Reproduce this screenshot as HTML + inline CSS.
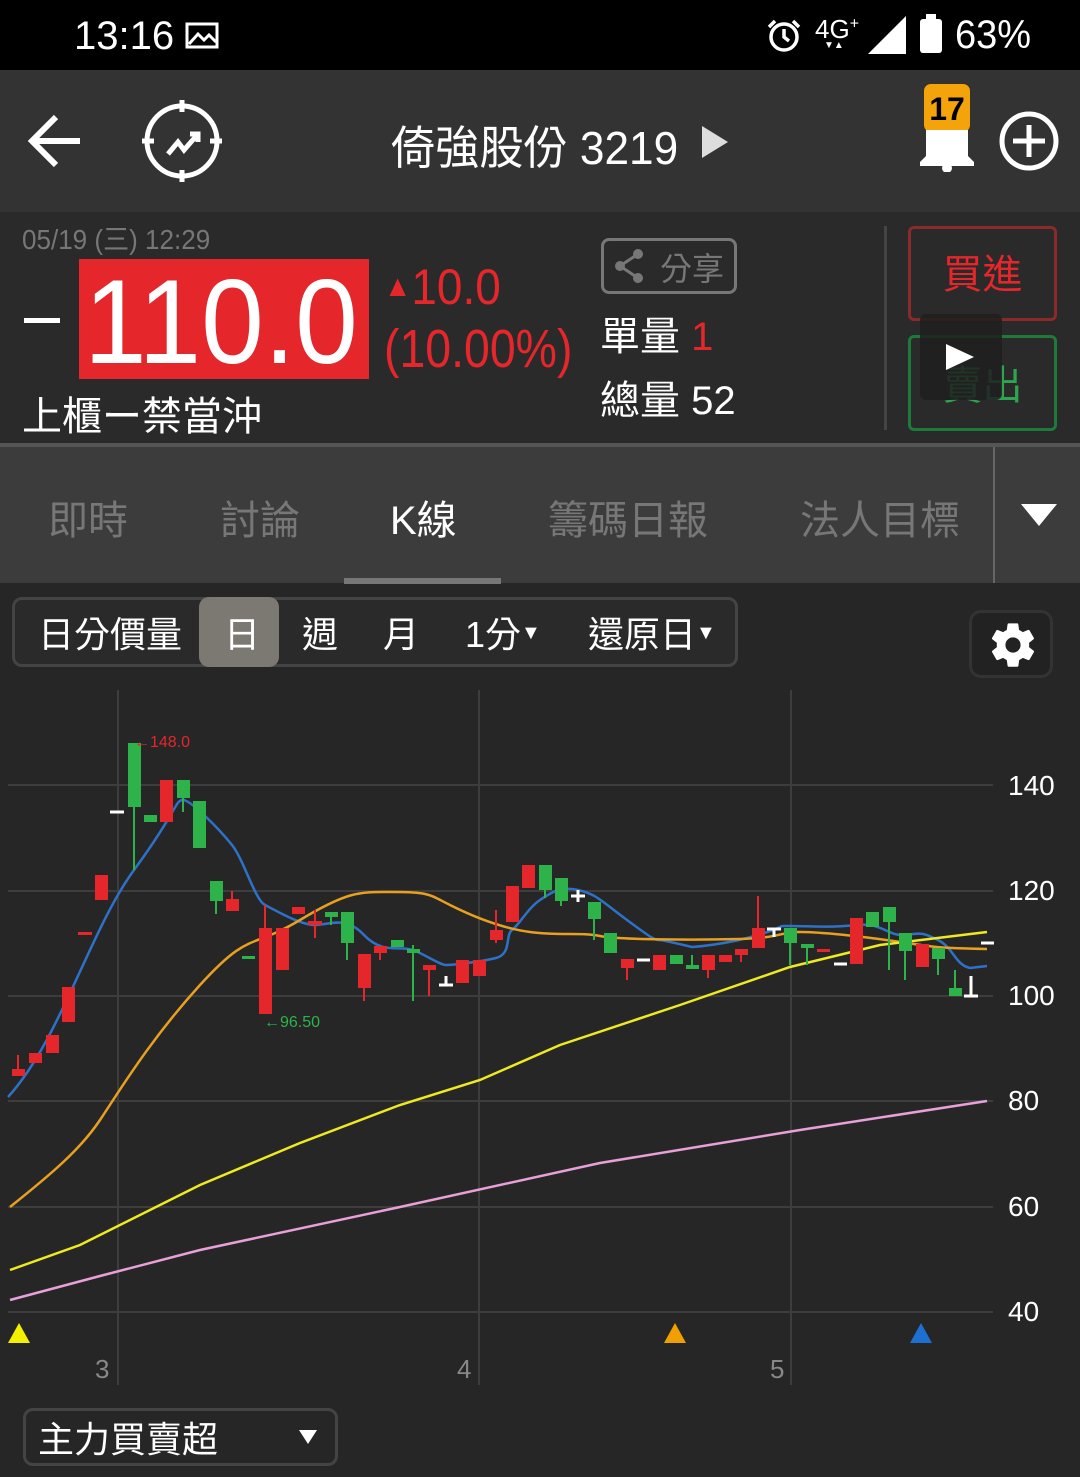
<!DOCTYPE html>
<html><head><meta charset="utf-8">
<style>
*{margin:0;padding:0;box-sizing:border-box}
body{width:1080px;height:1477px;background:#262626;font-family:"Liberation Sans","Noto Sans CJK TC",sans-serif;color:#fff;position:relative;overflow:hidden}
.a{position:absolute;white-space:nowrap}
</style></head><body>
<div class="a" style="left:0;top:0;width:1080px;height:70px;background:#000"></div>
<div class="a" style="left:74px;top:14px;font-size:40px">13:16</div>
<svg class="a" style="left:185px;top:22px" width="34" height="28"><rect x="2" y="2" width="30" height="23" fill="none" stroke="#fff" stroke-width="3"/><path d="M4 22 L13 12 L19 18 L24 13 L31 20" fill="none" stroke="#fff" stroke-width="3"/></svg>
<svg class="a" style="left:765px;top:18px" width="38" height="36"><circle cx="19" cy="19" r="13" fill="none" stroke="#fff" stroke-width="3.5"/><path d="M19 11V19L24 23M4 9L10 3M34 9L28 3" stroke="#fff" stroke-width="3.5" fill="none"/></svg>
<div class="a" style="left:815px;top:14px;font-size:26px">4G<sup style="font-size:16px">+</sup></div>
<div class="a" style="left:824px;top:40px;font-size:10px">▼▲</div>
<svg class="a" style="left:866px;top:14px" width="42" height="42"><path d="M40 2V40H2Z" fill="#fff"/></svg>
<svg class="a" style="left:918px;top:14px" width="26" height="40"><rect x="8" y="0" width="10" height="6" fill="#fff"/><rect x="2" y="5" width="22" height="34" rx="3" fill="#fff"/></svg>
<div class="a" style="left:955px;top:13px;font-size:40px;transform:scaleX(.95);transform-origin:left">63%</div>

<div class="a" style="left:0;top:70px;width:1080px;height:142px;background:#333"></div>
<svg class="a" style="left:26px;top:112px" width="60" height="58"><path d="M54 29H6M30 5L6 29L30 53" stroke="#fff" stroke-width="6" fill="none"/></svg>
<svg class="a" style="left:140px;top:98px" width="84" height="86"><circle cx="42" cy="43" r="35" fill="none" stroke="#fff" stroke-width="5"/><path d="M42 2V14M42 72V84M2 43H14M70 43H82" stroke="#fff" stroke-width="5"/><path d="M28 56L38 44L44 52L58 36M50 36H58V44" stroke="#fff" stroke-width="5" fill="none"/></svg>
<div class="a" style="left:391px;top:112px;font-size:46px;transform:scaleX(.96);transform-origin:left">倚強股份 3219</div>
<svg class="a" style="left:700px;top:124px" width="30" height="36"><path d="M2 2L28 18L2 34Z" fill="#ddd"/></svg>
<div class="a" style="left:924px;top:84px;width:46px;height:48px;background:#f5a30a;border-radius:7px;color:#000;font-size:32px;font-weight:bold;text-align:center;line-height:50px">17</div>
<svg class="a" style="left:918px;top:130px" width="58" height="42"><path d="M8 0H50V26L56 32V36H2V32L8 26Z" fill="#fff"/><circle cx="29" cy="38" r="5" fill="#fff"/></svg>
<svg class="a" style="left:998px;top:110px" width="62" height="62"><circle cx="31" cy="31" r="27" fill="none" stroke="#fff" stroke-width="5"/><path d="M31 15V47M15 31H47" stroke="#fff" stroke-width="5"/></svg>

<div class="a" style="left:0;top:212px;width:1080px;height:232px;background:#2a2a2a"></div>
<div class="a" style="left:22px;top:218px;font-size:28px;color:#777;transform:scaleX(.93);transform-origin:left">05/19 (三) 12:29</div>
<div class="a" style="left:24px;top:318px;width:36px;height:5px;background:#fff"></div>
<div class="a" style="left:79px;top:259px;width:290px;height:120px;background:#e5262b"></div>
<div class="a" style="left:84px;top:252px;font-size:120px;line-height:140px;color:#fff;transform:scaleX(.94);transform-origin:left">110.0</div>
<div class="a" style="left:384px;top:258px;font-size:50px;color:#e5262b;transform:scaleX(.92);transform-origin:left"><span style="font-size:30px;vertical-align:8px">▲</span>10.0</div>
<div class="a" style="left:384px;top:318px;font-size:54px;color:#e5262b;transform:scaleX(.86);transform-origin:left">(10.00%)</div>
<div class="a" style="left:22px;top:384px;font-size:40px">上櫃ー禁當沖</div>
<div class="a" style="left:601px;top:238px;width:136px;height:56px;border:3px solid #777;border-radius:8px"></div>
<svg class="a" style="left:612px;top:248px" width="36" height="36"><circle cx="26" cy="6" r="5" fill="#777"/><circle cx="8" cy="18" r="5" fill="#777"/><circle cx="26" cy="30" r="5" fill="#777"/><path d="M26 6L8 18L26 30" stroke="#777" stroke-width="3" fill="none"/></svg>
<div class="a" style="left:660px;top:244px;font-size:32px;color:#777">分享</div>
<div class="a" style="left:600px;top:304px;font-size:40px">單量 <span style="color:#e5262b">1</span></div>
<div class="a" style="left:600px;top:368px;font-size:40px">總量 52</div>
<div class="a" style="left:884px;top:226px;width:3px;height:204px;background:#444"></div>
<div class="a" style="left:908px;top:226px;width:149px;height:95px;border:3px solid #8a2a2a;border-radius:6px;color:#e5262b;font-size:40px;text-align:center;line-height:92px">買進</div>
<div class="a" style="left:908px;top:335px;width:149px;height:96px;border:3px solid #1f7a3a;border-radius:6px;color:#2ea44f;font-size:40px;text-align:center;line-height:96px">賣出</div>
<div class="a" style="left:920px;top:314px;width:82px;height:86px;background:rgba(30,30,30,.85);border-radius:6px"></div>
<svg class="a" style="left:944px;top:342px" width="32" height="30"><path d="M2 2L30 15L2 28Z" fill="#fff"/></svg>

<div class="a" style="left:0;top:443px;width:1080px;height:4px;background:#555"></div>
<div class="a" style="left:0;top:447px;width:1080px;height:136px;background:#3c3c3c"></div>
<div class="a" style="left:48px;top:488px;font-size:40px;color:#777">即時</div>
<div class="a" style="left:220px;top:488px;font-size:40px;color:#777">討論</div>
<div class="a" style="left:390px;top:488px;font-size:40px;color:#fff">K線</div>
<div class="a" style="left:548px;top:488px;font-size:40px;color:#777">籌碼日報</div>
<div class="a" style="left:800px;top:488px;font-size:40px;color:#777">法人目標</div>
<div class="a" style="left:344px;top:578px;width:157px;height:6px;background:#777"></div>
<div class="a" style="left:993px;top:447px;width:2px;height:136px;background:#666"></div>
<svg class="a" style="left:1020px;top:503px" width="38" height="24"><path d="M1 1H37L19 23Z" fill="#fff"/></svg>

<div class="a" style="left:12px;top:597px;width:726px;height:70px;border:3px solid #444;border-radius:10px;background:#2a2a2a"></div>
<div class="a" style="left:199px;top:597px;width:80px;height:70px;background:#7c7872;border-radius:10px"></div>
<div class="a" style="left:38px;top:606px;font-size:36px">日分價量</div>
<div class="a" style="left:224px;top:606px;font-size:36px">日</div>
<div class="a" style="left:302px;top:606px;font-size:36px">週</div>
<div class="a" style="left:383px;top:606px;font-size:36px">月</div>
<div class="a" style="left:465px;top:606px;font-size:36px">1分<span style="font-size:20px;vertical-align:8px">▼</span></div>
<div class="a" style="left:588px;top:606px;font-size:36px">還原日<span style="font-size:20px;vertical-align:8px">▼</span></div>
<div class="a" style="left:969px;top:610px;width:84px;height:68px;border:3px solid #333;border-radius:12px;background:#222"></div>
<svg class="a" style="left:987px;top:619px" width="52" height="52" viewBox="0 0 24 24"><path fill="#fff" d="M19.4 13c.04-.3.06-.64.06-1s-.02-.7-.07-1l2.1-1.650c.2-.15.24-.42.12-.64l-2-3.460c-.12-.22-.38-.3-.6-.22l-2.5 1c-.5-.4-1.080-.73-1.700-.98l-.37-2.650A.5.5 0 0 0 14 2h-4a.5.5 0 0 0-.5.42l-.37 2.650c-.6.25-1.170.58-1.690.98l-2.490-1a.5.5 0 0 0-.6.22l-2 3.460c-.13.22-.07.49.12.64L4.570 11c-.05.3-.07.68-.07 1s.02.7.07 1l-2.100 1.650a.5.5 0 0 0-.12.64l2 3.460c.12.22.38.3.6.22l2.490-1c.52.4 1.080.73 1.690.98l.37 2.650c.05.24.25.42.5.42h4c.25 0 .46-.18.49-.42l.37-2.650c.61-.25 1.170-.58 1.690-.98l2.490 1c.23.09.48 0 .6-.22l2-3.460a.5.5 0 0 0-.12-.64zM12 15.500A3.500 3.500 0 1 1 12 8.500a3.500 3.500 0 0 1 0 7z"/></svg>

<svg class="a" style="left:0;top:0" width="1080" height="1477">
<g stroke="#3d3d3d" stroke-width="2">
<path d="M8 785H993M8 891H993M8 996H993M8 1101H993M8 1207H993M8 1312H993"/>
<path d="M118 690V1385M479 690V1385M791 690V1385"/>
</g>
<g font-size="28" fill="#fff" font-family="Liberation Sans">
<text x="1008" y="795">140</text><text x="1008" y="900">120</text><text x="1008" y="1005">100</text><text x="1008" y="1110">80</text><text x="1008" y="1216">60</text><text x="1008" y="1321">40</text>
</g>
<g font-size="26" fill="#888" font-family="Liberation Sans"><text x="95" y="1378">3</text><text x="457" y="1378">4</text><text x="770" y="1378">5</text></g>
<path d="M8 1097C60 1040 90 930 134 870S175 800 183 800S220 830 232 845S255 900 265 905S300 925 315 925S345 915 364 935S400 945 413 950S440 965 446 965S480 962 496 958S505 935 512 930S528 908 540 900S560 886 578 890S600 900 627 920S655 940 659 940S692 947 692 947S725 945 758 935S774 926 790 926S830 928 856 925S889 937 905 935S922 932 938 940S955 965 970 968L987 966" fill="none" stroke="#2e72c8" stroke-width="2.5"/>
<path d="M10 1207C50 1175 80 1150 100 1120S150 1040 200 985S250 950 300 920S360 892 395 892S430 895 450 905S500 928 530 932S580 932 600 936S700 940 740 939S780 932 800 932S860 936 900 942S940 948 987 949" fill="none" stroke="#e8a020" stroke-width="2.5"/>
<path d="M10 1270L80 1245L200 1185L300 1143L400 1105L480 1080L560 1045L680 1005L790 967L880 945L987 932" fill="none" stroke="#eeea20" stroke-width="2.5"/>
<path d="M10 1300L100 1276L200 1250L400 1207L600 1163L800 1130L987 1101" fill="none" stroke="#e8a0d8" stroke-width="2.5"/>
<g>
<g fill="#e5262b" stroke="#e5262b" stroke-width="2">
<path d="M18 1055V1075M265 905V1014M315 910V938M364 954V1001M380 946V960M429 965V996M496 910V943M627 959V980M708 955V978M741 949V962M758 896V948M232 891V911"/>
</g>
<g fill="#e5262b">
<rect x="12" y="1069" width="13" height="7"/><rect x="29" y="1053" width="13" height="10"/><rect x="46" y="1035" width="13" height="18"/><rect x="62" y="987" width="13" height="35"/><rect x="78" y="932" width="14" height="3"/><rect x="95" y="875" width="13" height="25"/><rect x="160" y="780" width="13" height="42"/><rect x="226" y="899" width="13" height="12"/><rect x="259" y="928" width="13" height="86"/><rect x="276" y="928" width="13" height="42"/><rect x="292" y="907" width="13" height="7"/><rect x="308" y="921" width="14" height="4"/><rect x="358" y="954" width="13" height="34"/><rect x="374" y="946" width="13" height="7"/><rect x="423" y="965" width="13" height="5"/><rect x="456" y="960" width="13" height="23"/><rect x="473" y="960" width="13" height="16"/><rect x="490" y="930" width="13" height="10"/><rect x="506" y="886" width="13" height="36"/><rect x="522" y="865" width="13" height="23"/><rect x="621" y="959" width="13" height="9"/><rect x="653" y="955" width="13" height="15"/><rect x="702" y="955" width="13" height="15"/><rect x="719" y="955" width="13" height="7"/><rect x="735" y="949" width="13" height="6"/><rect x="752" y="928" width="13" height="20"/><rect x="817" y="949" width="13" height="3"/><rect x="850" y="918" width="13" height="46"/><rect x="916" y="944" width="13" height="23"/>
</g>
<g stroke="#2db34a" stroke-width="2">
<path d="M134 743V870M183 780V812M216 881V914M331 912V925M347 912V960M413 945V1001M545 865V898M561 878V906M594 902V940M692 955V969M790 928V965M807 944V965M889 907V970M905 933V980M938 948V975M955 970V996"/>
</g>
<g fill="#2db34a">
<rect x="128" y="743" width="13" height="64"/><rect x="144" y="815" width="13" height="7"/><rect x="177" y="780" width="13" height="18"/><rect x="193" y="801" width="13" height="47"/><rect x="210" y="881" width="13" height="20"/><rect x="242" y="956" width="13" height="3"/><rect x="325" y="912" width="13" height="5"/><rect x="341" y="912" width="13" height="31"/><rect x="391" y="940" width="13" height="7"/><rect x="407" y="949" width="13" height="4"/><rect x="539" y="865" width="13" height="25"/><rect x="555" y="878" width="13" height="23"/><rect x="588" y="902" width="13" height="17"/><rect x="604" y="933" width="13" height="20"/><rect x="670" y="955" width="13" height="9"/><rect x="686" y="965" width="13" height="4"/><rect x="784" y="928" width="13" height="15"/><rect x="801" y="944" width="13" height="4"/><rect x="866" y="912" width="13" height="15"/><rect x="883" y="907" width="13" height="15"/><rect x="899" y="933" width="13" height="18"/><rect x="932" y="948" width="13" height="11"/><rect x="949" y="988" width="13" height="8"/>
</g>
<g stroke="#fff" stroke-width="3" fill="none">
<path d="M110 812H124M439 985H453M446 976V985M571 896H585M578 890V902M637 960H650M767 929H781M774 929V937M834 964H847M964 996H978M971 976V996M981 943H994"/>
</g>
</g>
<text x="134" y="747" font-size="16" fill="#e5262b" font-family="Liberation Sans">←148.0</text>
<text x="264" y="1027" font-size="16" fill="#2db34a" font-family="Liberation Sans">←96.50</text>
<path d="M8 1343L19 1323L30 1343Z" fill="#f5f000"/>
<path d="M664 1343L675 1323L686 1343Z" fill="#f0a000"/>
<path d="M910 1343L921 1323L932 1343Z" fill="#1e70d0"/>
</svg>

<div class="a" style="left:23px;top:1408px;width:315px;height:58px;border:3px solid #444;border-radius:10px"></div>
<div class="a" style="left:38px;top:1411px;font-size:36px">主力買賣超</div>
<svg class="a" style="left:298px;top:1429px" width="20" height="16"><path d="M1 1H19L10 15Z" fill="#fff"/></svg>
</body></html>
